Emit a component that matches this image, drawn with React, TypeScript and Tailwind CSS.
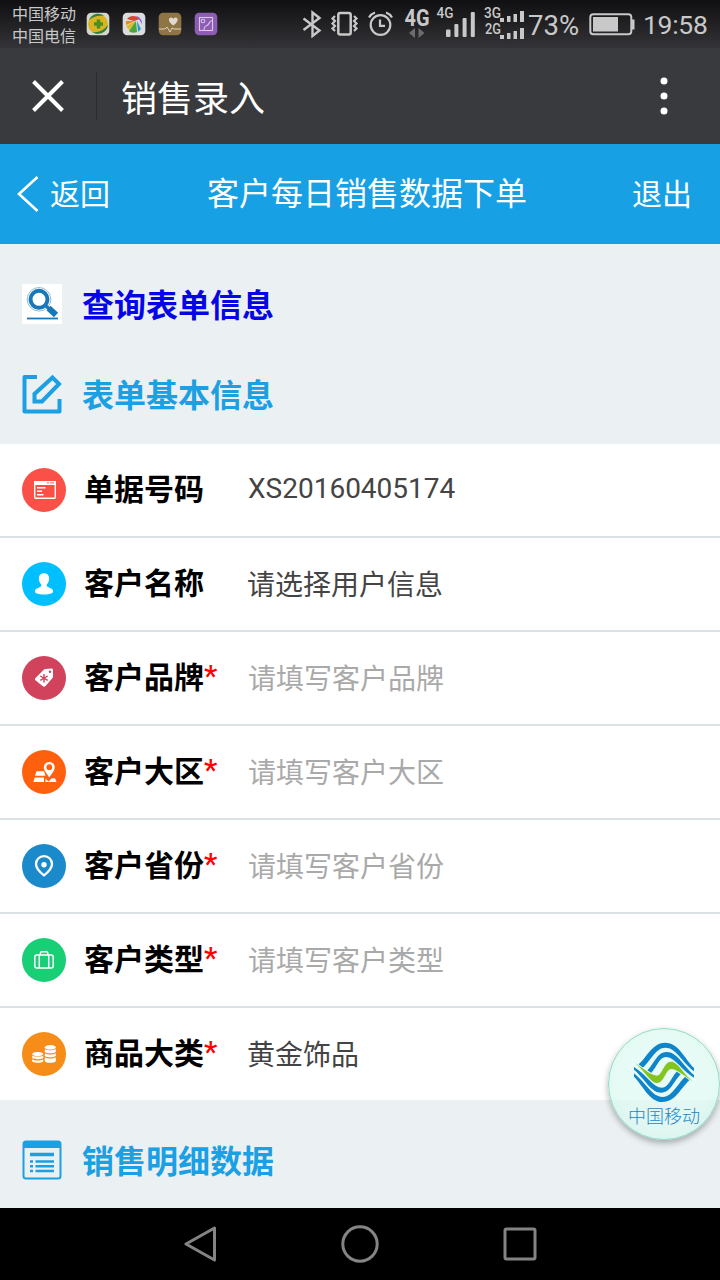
import type { ReactNode } from "react";

type Field = {
  label: string;
  value: string;
  required?: boolean;
  placeholder?: boolean;
  color: string;
  icon: ReactNode;
};

const fields: Field[] = [
  {
    label: "单据号码",
    value: "XS20160405174",
    color: "bg-[#fa5048]",
    icon: (
      <>
        <rect x="12.7" y="13.7" width="20.6" height="16.6" rx="1" fill="none" stroke="#fff" strokeWidth="1.4" />
        <path d="M12 13h22v4H12z" fill="#fff" />
        <path d="M25 14.9h2M28 14.9h4" stroke="#fa5048" strokeWidth="1" />
        <path d="M15 19.8h8.5M15 23.3h5M15 26.8h6.5" stroke="#fff" strokeWidth="1.4" />
      </>
    ),
  },
  {
    label: "客户名称",
    value: "请选择用户信息",
    color: "bg-[#00bfff]",
    icon: (
      <path
        fill="#fff"
        d="M22 11.2c3.2 0 5.2 2.2 5.2 5.3 0 2.4-1 4.5-2.3 5.8-.6 1.7.1 2.5 1.9 3.1 2.6.8 4.4 1.8 4.4 4 0 2-4.2 3-9.2 3s-9.2-1-9.2-3c0-2.2 1.8-3.2 4.4-4 1.8-.6 2.5-1.4 1.9-3.1-1.3-1.3-2.3-3.4-2.3-5.8 0-3.1 2-5.3 5.2-5.3z"
      />
    ),
  },
  {
    label: "客户品牌",
    value: "请填写客户品牌",
    required: true,
    placeholder: true,
    color: "bg-[#d1425c]",
    icon: (
      <>
        <path
          d="M21.5 14c.6-.6 1.2-.9 2-.9l5.8-.6c1-.1 1.7.5 1.7 1.5v6.2c0 .8-.2 1.5-.7 2.1l-6.8 7.7c-.7.9-1.8 1-2.7.3l-7.1-5.7c-.9-.7-1-1.8-.2-2.7z"
          fill="#fff"
        />
        <circle cx="28" cy="15.8" r="1.2" fill="#d1425c" />
        <path d="M22 18v8.5M18.3 20l7.4 4.4M25.7 20l-7.4 4.4" stroke="#d1425c" strokeWidth="1.4" />
      </>
    ),
  },
  {
    label: "客户大区",
    value: "请填写客户大区",
    required: true,
    placeholder: true,
    color: "bg-[#ff600d]",
    icon: (
      <>
        <path d="M14.5 21.3h7.5l1.5 4.5h-10.5zM12.8 27.5h9.2v4.5H11.3zM23.5 28.5l3 3 3-3 3.5-.3 1.5 3.8H23.5z" fill="#fff" />
        <path
          d="M27.3 12c3.2 0 5.4 2.4 5.4 5.3 0 3.6-3.5 6.8-5.4 10.2-1.9-3.4-5.4-6.6-5.4-10.2 0-2.9 2.2-5.3 5.4-5.3z"
          fill="#fff"
        />
        <circle cx="27.3" cy="17.2" r="2.9" fill="#ff600d" />
      </>
    ),
  },
  {
    label: "客户省份",
    value: "请填写客户省份",
    required: true,
    placeholder: true,
    color: "bg-[#1b8acb]",
    icon: (
      <>
        <path
          d="M22 12.2c-4.7 0-8 3.5-8 7.9 0 5 4.3 8.5 8 11.3 3.7-2.8 8-6.3 8-11.3 0-4.4-3.3-7.9-8-7.9z"
          fill="none"
          stroke="#fff"
          strokeWidth="2.3"
        />
        <circle cx="22" cy="20.7" r="2.7" fill="#fff" />
      </>
    ),
  },
  {
    label: "客户类型",
    value: "请填写客户类型",
    required: true,
    placeholder: true,
    color: "bg-[#18cf76]",
    icon: (
      <g fill="none" stroke="#fff" strokeWidth="1.5">
        <rect x="12.8" y="17" width="18.4" height="13" rx="2" />
        <path d="M17.3 17v13M26.700 17v13M18.300 17v-1.500c0-1 .7-1.700 1.700-1.700h4.200c1 0 1.700.7 1.700 1.700V17" />
      </g>
    ),
  },
  {
    label: "商品大类",
    value: "黄金饰品",
    required: true,
    color: "bg-[#f58d18]",
    icon: (
      <g fill="#fff">
        <ellipse cx="28.3" cy="15.3" rx="5.5" ry="2.3" />
        <path d="M22.8 17c2 1.8 9 1.8 11 0v3c-2 1.7-9 1.7-11 0zM22.8 21.3c2 1.7 9 1.7 11 0v2.7c-2 1.7-9 1.7-11 0zM22.8 25.3c2 1.7 9 1.7 11 0v4c-2 2-9 2-11 0z" />
        <ellipse cx="15.7" cy="22" rx="5.5" ry="2.1" />
        <path d="M10.2 23.4c2 1.6 9 1.6 11 0v2.7c-2 1.6-9 1.6-11 0zM10.2 27.3c2 1.6 9 1.6 11 0v2.2c-2 1.8-9 1.8-11 0z" />
      </g>
    ),
  },
];

const StatusBar = () => {
  return (
    <div className="h-12 flex items-center pl-3 bg-linear-to-b from-[#101012] to-[#343438] text-[#c8c8c8]">
      <div className="w-[74px] text-[16px] leading-[22px] pt-1 whitespace-nowrap">
        <p>中国移动</p>
        <p>中国电信</p>
      </div>
      <div className="flex gap-3">
        <svg width="24" height="24" viewBox="0 0 24 24">
          <rect x=".7" y=".7" width="22.6" height="22.6" rx="4.5" fill="#d4d6ce" />
          <circle cx="12" cy="12" r="10" fill="#d9b422" />
          <path d="M3 8C6 1 14 0 18 4 11 3 7 5 3 8zM22 13c-1 8-10 11-16 7 7 1 12-2 16-7z" fill="#2b7f45" />
          <path d="M12.5 7.5v9M8 12h9" stroke="#4a8f22" strokeWidth="3.500" />
        </svg>
        <svg width="24" height="24" viewBox="0 0 24 24">
          <rect x=".7" y=".7" width="22.6" height="22.6" rx="4.5" fill="#dcdcdc" />
          <path d="M5 7C8 3 14 3 18 7l-6 2z" fill="#d9472b" />
          <path d="M4 9l9 0-9 4z" fill="#e58a1f" />
          <path d="M4 14l10-5-7 9z" fill="#e0ba27" />
          <path d="M7 19l7-10 1 11c-3 1-6 1-8-1z" fill="#4ba537" />
          <path d="M15 9l4 8-3 3z" fill="#2b9bd0" />
          <path d="M14 4c4 1 6 4 6 8l-3-5z" fill="#a14fc0" />
        </svg>
        <svg width="24" height="24" viewBox="0 0 24 24">
          <rect x=".7" y=".7" width="22.6" height="22.6" rx="4.5" fill="#8f7444" />
          <path d="M15.3 13.5c-6-4-4.8-8-2.3-8 1.3 0 2 .8 2.3 1.5.3-.7 1-1.5 2.3-1.5 2.5 0 3.7 4-2.3 8z" fill="#dedad0" />
          <path d="M1 17h6l2-2 3 5 2-4 2 1h7" fill="none" stroke="#ddd4bd" strokeWidth="1" />
        </svg>
        <svg width="24" height="24" viewBox="0 0 24 24">
          <rect x=".7" y=".7" width="22.6" height="22.6" rx="4.5" fill="#8e5cb4" />
          <g fill="none" stroke="#d9c7e6" strokeWidth="1.1">
            <rect x="5.5" y="5.5" width="13" height="13" />
            <circle cx="9" cy="9" r="1.8" />
            <path d="M10 18c0-3 1-4 3-4.500s2-4.500 5-5" />
          </g>
        </svg>
      </div>
      <svg className="ml-[84px]" width="20" height="28" viewBox="0 0 20 28" fill="none" stroke="#c8c8c8" strokeWidth="2.4">
        <path d="M1.5 8.5L17.5 20.5 10.5 26V2.5l7 5.5L1.5 20" />
      </svg>
      <svg className="ml-2" width="29" height="28" viewBox="0 0 29 28" fill="none" stroke="#c8c8c8">
        <rect x="8.3" y="3" width="12.4" height="21.5" rx="2" strokeWidth="2.5" />
        <path d="M5 6L2.5 8.5 5 11 2.5 13.5 5 16 2.5 18.5 5 21M24 6l2.5 2.5L24 11l2.5 2.5L24 16l2.5 2.5L24 21" strokeWidth="2.2" />
      </svg>
      <svg className="ml-2" width="26" height="28" viewBox="0 0 26 28" fill="none" stroke="#c8c8c8" strokeWidth="2.2">
        <circle cx="13.5" cy="15" r="9.8" />
        <path d="M13 9.5v6.300h5M2 7.500C3.500 5 5.500 3.300 8 2.500M25 7.500C23.500 5 21.500 3.300 19 2.500" />
      </svg>
      <svg className="ml-2" width="32" height="48" viewBox="0 0 32 48" fill="#c8c8c8">
        <text x="3.500" y="26" fontSize="24" fontWeight="700" textLength="25" lengthAdjust="spacingAndGlyphs">4G</text>
        <path d="M14 28v10l-6-5zM17.500 28v10l6-5z" fill="#6c6c6e" />
      </svg>
      <svg className="ml-0.5" width="42" height="48" viewBox="0 0 42 48" fill="#c8c8c8">
        <text x="1.500" y="18" fontSize="14" fontWeight="500" textLength="17" lengthAdjust="spacingAndGlyphs">4G</text>
        <rect x="11" y="29.5" width="4.5" height="7.5" rx="1" />
        <rect x="19.4" y="24" width="4" height="13" rx="1" />
        <rect x="27.6" y="18" width="4" height="19" rx="1" />
        <rect x="35.8" y="12" width="4" height="25" rx="1" />
      </svg>
      <svg className="ml-1" width="44" height="48" viewBox="0 0 44 48" fill="#c8c8c8">
        <text x="3" y="18" fontSize="14" fontWeight="500" textLength="17" lengthAdjust="spacingAndGlyphs">3G</text>
        <text x="4" y="34" fontSize="14" fontWeight="500" textLength="16" lengthAdjust="spacingAndGlyphs">2G</text>
        <path d="M19 18h4v4h-4zM26 16h3.500v6H26zM32.500 14H36v8h-3.500zM39 11h4v11h-4zM19 35h4v4h-4zM26 33h3.500v6H26zM32.500 31H36v8h-3.500zM39 28h4v11h-4z" />
      </svg>
      <span className="ml-[3px] mt-[3px] w-[55px] text-[27.5px] leading-8">73%</span>
      <svg className="ml-1.5" width="46" height="24" viewBox="0 0 46 24">
        <rect x="1.3" y="2.3" width="41" height="20" rx="3" fill="none" stroke="#c8c8c8" strokeWidth="2" />
        <path d="M4 5h25v14.500H4zM43 7.500h2.500v10H43z" fill="#c8c8c8" />
      </svg>
      <span className="ml-2 mt-0.5 text-[26.5px] leading-8 tracking-[-0.3px]">19:58</span>
    </div>
  );
};

// one half of the logo, the other is the same turned by 180 degrees
const LogoHalf = () => {
  return (
    <>
      <path d="M146 163C172 139 188 98 226 98c40 0 58 48 86 76v10c-38-30-54-71-86-71-28 0-40 34-69 62z" />
      <path d="M172 181c22-22 30-55 58-55 32 0 48 40 82 69v8c-42-27-58-62-84-62-20 0-26 28-45 49z" />
    </>
  );
};

const ChinaMobileBadge = () => {
  return (
    <div className="absolute left-[608px] top-[1028px] w-28 h-28 rounded-full border border-[#8fdcc4] bg-radial from-[#e0faf3]/75 from-50% to-[#cdf5e7]/70 shadow-[0_3px_6px_rgba(0,0,0,0.3)]">
      <svg className="absolute -left-px -top-px" width="112" height="112" viewBox="54 54 336 336">
        <g fill="#0e84cb">
          <LogoHalf />
          <g transform="rotate(180 222 187)">
            <LogoHalf />
          </g>
        </g>
        <path
          d="M137 160C165 180 185 197 200 197c18 0 20-42 44-42 18 0 36 35 63 59-28-20-48-37-63-37-18 0-20 42-44 42-18 0-36-35-63-59z"
          fill="#83c51d"
          stroke="#e0f8f2"
          strokeWidth="5"
          paintOrder="stroke"
        />
      </svg>
      <p className="absolute top-[76px] w-full text-center text-[18px] leading-6 font-light text-[#2686bf]">
        中国移动
      </p>
    </div>
  );
};

const App = () => {
  return (
    <div className="relative w-[720px] h-[1280px] overflow-hidden flex flex-col bg-[#ebf0f3] font-[Roboto,'Noto_Sans_CJK_SC',sans-serif]">
      <StatusBar />
      <header className="h-24 flex items-center bg-[#393a3e] text-white">
        <svg className="ml-8" width="32" height="32" viewBox="0 0 32 32" stroke="#fff" strokeWidth="4">
          <path d="M1.5 1.5l29 29M30.5 1.5l-29 29" />
        </svg>
        <div className="ml-8 h-12 w-px bg-[#2b2c2f]" />
        <h1 className="ml-6 pt-2 text-[36px] leading-[48px]">销售录入</h1>
        <div className="ml-auto mr-[53px] flex flex-col gap-[9px]">
          <i className="size-1.5 rounded-full bg-white ring-[0.5px] ring-white" />
          <i className="size-1.5 rounded-full bg-white ring-[0.5px] ring-white" />
          <i className="size-1.5 rounded-full bg-white ring-[0.5px] ring-white" />
        </div>
      </header>
      <nav className="h-[100px] flex items-center bg-[#18a0e4] text-white text-[30px]">
        <svg className="ml-4" width="24" height="38" viewBox="0 0 24 38" fill="none" stroke="#fff" strokeWidth="2.6">
          <path d="M21.5 2L3 19l18.5 17" />
        </svg>
        <span className="ml-[10px] w-[60px]">返回</span>
        <h2 className="ml-[97px] text-[32px]">客户每日销售数据下单</h2>
        <span className="ml-auto mr-7">退出</span>
      </nav>

      <div className="h-[200px] pt-[38px] pl-[22px] text-[32px] font-bold leading-[44px]">
        <div className="h-11 flex items-center gap-5 text-[#0505e6]">
          <svg width="40" height="40" viewBox="0 0 40 40">
            <path fill="#fff" d="M0 0h40v40H0z" />
            <circle cx="17" cy="15.3" r="11.8" fill="none" stroke="#5c9fca" strokeWidth=".7" />
            <circle cx="17" cy="15.3" r="8.5" fill="none" stroke="#1877b8" strokeWidth="4" />
            <path d="M24 22l4 3.500" stroke="#1877b8" strokeWidth="3" />
            <path d="M26.500 24l7.500 7" stroke="#1877b8" strokeWidth="6" />
            <path d="M5 33.600h31v1.800H5z" fill="#1877b8" />
          </svg>
          <span className="pt-1">查询表单信息</span>
        </div>
        <div className="mt-[46px] h-11 flex items-center gap-5 text-[#1aa0e3]">
          <svg width="40" height="40" viewBox="0 0 40 40" fill="none" stroke="#1aa0e3" strokeWidth="4">
            <path d="M15 3H2.500v34.500h35V25" strokeLinejoin="round" />
            <path d="M12.500 27.500V20L30.500 3.500l6.500 6.500L20 27.500z" />
          </svg>
          <span className="pt-1">表单基本信息</span>
        </div>
      </div>

      <ul className="bg-white">
        {fields.map(({ label, value, required, placeholder, color, icon }) => (
          <li
            key={label}
            className="h-[94px] pl-[22px] flex items-center border-b-2 border-[#dce2e4] last:h-[92px] last:border-b-0"
          >
            <span className={`size-11 rounded-full ${color}`}>
              <svg width="44" height="44" viewBox="0 0 44 44">
                {icon}
              </svg>
            </span>
            <label className="ml-[18px] w-[163px] text-[30px] leading-10 font-bold text-black">
              {label}
              {required && <span className="inline-block -translate-y-0.5 font-medium text-[#ff0000]">*</span>}
            </label>
            <span
              className={`text-[28px] leading-10 ${placeholder ? "pl-px pt-1 text-[#a9a9a9]" : label === "单据号码" ? "pl-px pb-0.5 text-[#444]" : "pt-1 text-[#444]"}`}
            >
              {value}
            </span>
          </li>
        ))}
      </ul>

      <div className="h-[108px] pt-[12px] pl-[22px] flex items-center gap-5 text-[32px] font-bold text-[#1aa0e3]">
        <svg width="40" height="40" viewBox="0 0 40 40">
          <rect x="1.5" y="1.5" width="37" height="37" rx="2.5" fill="none" stroke="#1aa0e3" strokeWidth="2" />
          <path d="M1.5 2h37v6h-37z" fill="#1aa0e3" />
          <path d="M8 14.5h24" stroke="#1aa0e3" strokeWidth="3.5" />
          <path d="M8 21.5h3M13.5 21.5H32M8 26.2h3M13.5 26.2H32M8 31h3M13.5 31H32" stroke="#1aa0e3" strokeWidth="2.4" />
        </svg>
        <span className="pt-1">销售明细数据</span>
      </div>

      <footer className="h-[72px] bg-black pl-[184px] flex items-center">
        <svg width="34" height="38" viewBox="0 0 34 38" fill="none" stroke="#848484" strokeWidth="3" strokeLinejoin="round">
          <path d="M30.5 3v32L2 19z" />
        </svg>
        <svg className="ml-[123px]" width="38" height="38" viewBox="0 0 38 38" fill="none" stroke="#848484" strokeWidth="3">
          <circle cx="19" cy="19" r="17.2" />
        </svg>
        <svg className="ml-[123px]" width="36" height="36" viewBox="0 0 36 36" fill="none" stroke="#848484" strokeWidth="3">
          <rect x="3" y="3" width="30" height="30" rx="1.5" />
        </svg>
      </footer>

      <ChinaMobileBadge />
    </div>
  );
};

export default App;
